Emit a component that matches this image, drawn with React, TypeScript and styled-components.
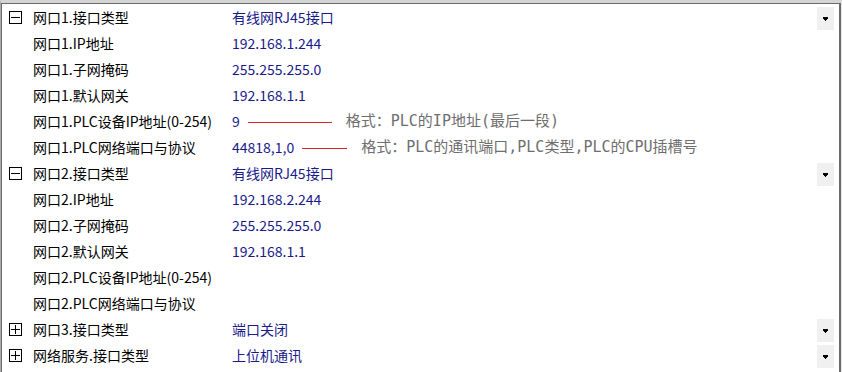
import React from 'react';
import styled, { createGlobalStyle } from 'styled-components';

type Row = {
  label: string;
  value?: string;
  group?: 'open' | 'closed';
  dropdown?: boolean;
  note?: string;
  line?: number;
};

const rows: Row[] = [
  { label: '网口1.接口类型', value: '有线网RJ45接口', group: 'open', dropdown: true },
  { label: '网口1.IP地址', value: '192.168.1.244' },
  { label: '网口1.子网掩码', value: '255.255.255.0' },
  { label: '网口1.默认网关', value: '192.168.1.1' },
  { label: '网口1.PLC设备IP地址(0-254)', value: '9', line: 84, note: '格式：PLC的IP地址(最后一段)' },
  { label: '网口1.PLC网络端口与协议', value: '44818,1,0', line: 45, note: '格式：PLC的通讯端口,PLC类型,PLC的CPU插槽号' },
  { label: '网口2.接口类型', value: '有线网RJ45接口', group: 'open', dropdown: true },
  { label: '网口2.IP地址', value: '192.168.2.244' },
  { label: '网口2.子网掩码', value: '255.255.255.0' },
  { label: '网口2.默认网关', value: '192.168.1.1' },
  { label: '网口2.PLC设备IP地址(0-254)' },
  { label: '网口2.PLC网络端口与协议' },
  { label: '网口3.接口类型', value: '端口关闭', group: 'closed', dropdown: true },
  { label: '网络服务.接口类型', value: '上位机通讯', group: 'closed', dropdown: true },
];

export default function App() {
  return (
    <>
      <GlobalStyle />
      <Frame>
        <Grid>
          {rows.map((row, i) => (
            <RowLine key={i}>
              <Expander>
                {row.group && <ToggleBox open={row.group === 'open'} />}
              </Expander>
              <Label>{row.label}</Label>
              <Value>
                {row.value}
                {row.line && <RedLine style={{ width: row.line }} />}
                {row.note && <Note>{row.note}</Note>}
              </Value>
              <Action>{row.dropdown && <DropButton />}</Action>
            </RowLine>
          ))}
        </Grid>
      </Frame>
    </>
  );
}

function ToggleBox({ open }: { open: boolean }) {
  return (
    <svg width="13" height="13" viewBox="0 0 13 13" shapeRendering="crispEdges">
      <rect x="0.5" y="0.5" width="12" height="12" fill="#fff" stroke="#000" />
      <rect x="2" y="6" width="9" height="1" fill="#000" />
      {!open && <rect x="6" y="2" width="1" height="9" fill="#000" />}
    </svg>
  );
}

function DropButton() {
  return (
    <DropBox>
      <svg width="5" height="4" viewBox="0 0 5 4" shapeRendering="crispEdges">
        <rect x="0" y="0" width="5" height="2" fill="#000" />
        <rect x="1" y="2" width="3" height="1" fill="#000" />
        <rect x="2" y="3" width="1" height="1" fill="#000" />
      </svg>
    </DropBox>
  );
}

const GlobalStyle = createGlobalStyle`
  html, body {
    margin: 0;
    padding: 0;
    background: #fff;
  }
  body {
    width: 842px;
    height: 372px;
    overflow: hidden;
    font-family: "Noto Sans CJK SC", "Noto Sans", sans-serif;
  }
`;

const Frame = styled.div`
  width: 842px;
  height: 372px;
  box-sizing: border-box;
  border-top: 3px solid #d4d4d4;
  border-left: 1px solid #ababab;
  border-right: 1px solid #e8e8e8;
  background: #fff;
`;

const Grid = styled.div`
  height: 100%;
  box-sizing: border-box;
  border-top: 1px solid #6b6b6b;
  border-left: 1px solid #6b6b6b;
  border-right: 2px solid #6b6b6b;
  display: flex;
  flex-direction: column;
`;

const RowLine = styled.div`
  display: grid;
  grid-template-columns: 31px 199px 1fr 17px;
  align-items: center;
  height: 26px;
  padding-right: 5px;
  font-size: 14px;
  line-height: 26px;
  white-space: nowrap;
`;

const Expander = styled.div`
  display: flex;
  align-items: center;
  padding-left: 7px;
  height: 100%;
  padding-top: 1px;
  box-sizing: border-box;
`;

const Label = styled.div`
  color: #000;
`;

const Value = styled.div`
  display: flex;
  align-items: center;
  color: #1a1a8a;
`;

const RedLine = styled.span`
  display: inline-block;
  height: 1px;
  background: #d42424;
  margin: 2px 14px 0 8px;
`;

const Note = styled.span`
  font-family: "DejaVu Sans Mono", "Noto Sans CJK SC", monospace;
  font-size: 15px;
  color: #6e6e6e;
`;

const Action = styled.div`
  display: flex;
  align-items: center;
  justify-content: center;
  height: 100%;
`;

const DropBox = styled.div`
  width: 17px;
  height: 23px;
  margin-top: 3px;
  background: #f0f0f0;
  display: flex;
  align-items: center;
  justify-content: center;
`;
